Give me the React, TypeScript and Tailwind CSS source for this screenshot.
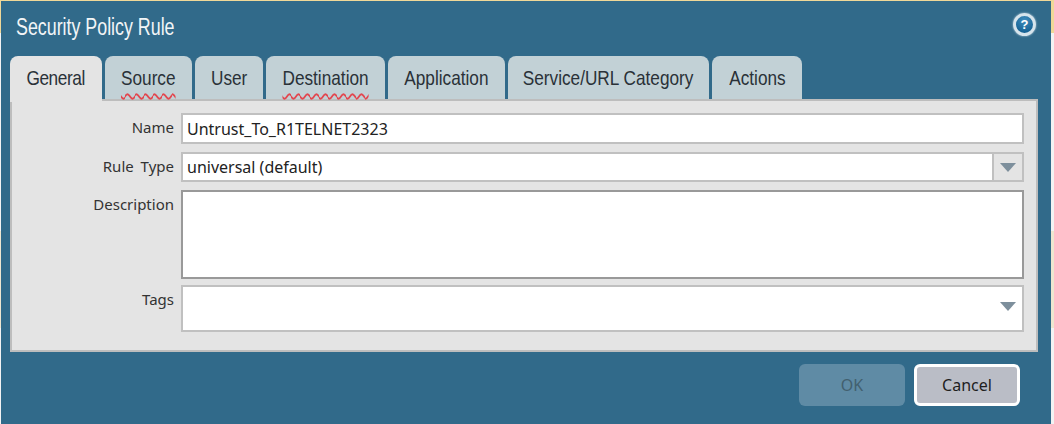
import type { ReactNode } from "react";

const tabs = [
  { label: "General", width: "w-[92px]", active: true },
  { label: "Source", width: "w-[87px]", squiggle: true },
  { label: "User", width: "w-[68px]" },
  { label: "Destination", width: "w-[119px]", squiggle: true },
  { label: "Application", width: "w-[117px]" },
  { label: "Service/URL Category", width: "w-[201px]" },
  { label: "Actions", width: "w-[90px]" },
];

const bodyFont = "font-['Noto_Sans',sans-serif] text-[15px]";

function Caret() {
  return (
    <svg width="16" height="9" viewBox="0 0 16 9" className="shrink-0">
      <polygon points="0,0 16,0 8,9" fill="#7d8f9c" />
    </svg>
  );
}

function Row({ label, alignTop, children }: { label: string; alignTop?: boolean; children: ReactNode }) {
  return (
    <div className={`flex gap-[7px] ${alignTop ? "items-start" : "items-center"}`}>
      <div className={`w-[162px] text-right text-[#333] [word-spacing:3px] ${alignTop ? "pt-[3px]" : "pb-[2px]"}`}>{label}</div>
      <div className="min-w-0 flex-1 text-[16px]">{children}</div>
    </div>
  );
}

export default function App() {
  return (
    <div className="h-[424px] w-[1054px] overflow-hidden bg-[linear-gradient(#f0d898_33px,#f3f3f3_33px,#f3f3f3_231px,#efe6d0_231px,#efe6d0_328px,#f3f3f3_328px)] pt-px">
      <div className="ml-px flex h-[423px] w-[1050px] flex-col bg-[#316a8a]">
        {/* title */}
        <div className="flex h-[55px] items-start justify-between pl-[15px] pr-[15px]">
          <h1 className="mt-[11px] origin-left scale-x-[0.775] whitespace-nowrap font-['Liberation_Sans',sans-serif] text-[23px] leading-[30px] text-[#f2f5f7]">
            Security Policy Rule
          </h1>
          <div className="mt-[12px] flex size-[23px] items-center justify-center rounded-full border-[3px] border-[#d6e4ec] bg-[radial-gradient(circle_at_50%_25%,#3f8dbd,#0b5688)] font-['Liberation_Sans',sans-serif] text-[13px] font-bold text-white shadow-[0_0_2px_#c6dae6]">
            ?
          </div>
        </div>

        {/* tabs */}
        <div className="relative z-10 ml-[9px] flex h-[44px] gap-[3px]">
          {tabs.map((t) => (
            <div
              key={t.label}
              className={`${t.width} flex justify-center rounded-t-[8px] pt-[8px] font-['Liberation_Sans',sans-serif] text-[#2a3138] ${
                t.active ? "h-[46px] bg-[#e4e4e4] tracking-[-0.5px]" : "h-[43px] bg-[#c2d1d6]"
              }`}
            >
              <span
                className={`inline-block origin-center scale-x-[0.82] whitespace-nowrap text-[21px] leading-[28px] ${
                  t.squiggle ? "underline decoration-[#e2474f] decoration-wavy decoration-[1.5px] underline-offset-[8px]" : ""
                }`}
              >
                {t.label}
              </span>
            </div>
          ))}
        </div>

        {/* form panel */}
        <div className={`${bodyFont} ml-[9px] mt-[-1px] flex h-[253px] w-[1028px] flex-col gap-[8px] border-2 border-[#bdbdbd] bg-[#e4e4e4] pr-[12px] pt-[12px]`}>
          <Row label="Name">
            <div className="flex h-[31px] items-center border-2 border-[#c0c0c0] bg-white pl-[4px] text-[#222]">
              Untrust_To_R1TELNET2323
            </div>
          </Row>
          <Row label="Rule Type">
            <div className="flex h-[30px] border-2 border-[#c0c0c0] bg-white">
              <div className="flex flex-1 items-center pl-[4px] text-[#222]">universal (default)</div>
              <div className="flex w-[30px] items-center justify-center border-l-2 border-[#c0c0c0] bg-[#e4e4e4]">
                <Caret />
              </div>
            </div>
          </Row>
          <Row label="Description" alignTop>
            <div className="h-[89px] border-2 border-[#999] bg-white" />
          </Row>
          <div className="-mt-[2px]">
            <Row label="Tags" alignTop>
              <div className="flex h-[47px] items-start justify-end border-2 border-[#c0c0c0] bg-white pr-[6px] pt-[15px]">
                <Caret />
              </div>
            </Row>
          </div>
        </div>

        {/* buttons */}
        <div className="ml-[798px] mt-[12px] flex gap-[9px] font-['Noto_Sans',sans-serif] text-[16px]">
          <button type="button" className="h-[42px] w-[106px] rounded-[6px] bg-[#5f8ba5] text-[#42606f]">
            OK
          </button>
          <button type="button" className="h-[42px] w-[106px] rounded-[6px] border-[3px] border-white bg-[#babdc6] text-[#1e1e1e]">
            Cancel
          </button>
        </div>
      </div>
    </div>
  );
}
